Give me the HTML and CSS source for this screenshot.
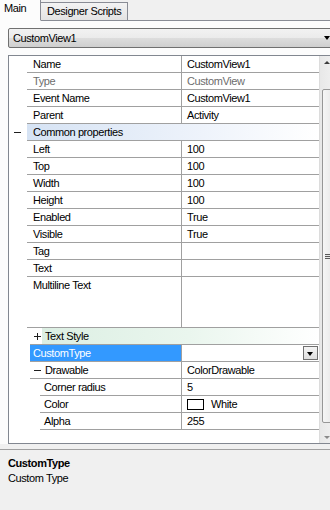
FILE: index.html
```html
<!DOCTYPE html>
<html lang="en">
<head>
    <meta charset="UTF-8">
    <title>Properties</title>
    <link rel="stylesheet" href="styles.css">
</head>
<body>

    <div class="tabs">
        <div class="tab active">Main</div>
        <div class="tab">Designer Scripts</div>
    </div>

    <div class="page">
        <div class="combo">
            <span>CustomView1</span>
            <span class="combo-arrow"></span>
        </div>

        <div class="grid">
            <div class="rows">
                <div class="row"><div class="gut"></div><div class="name">Name</div><div class="val">CustomView1</div></div>
                <div class="row dim"><div class="gut"></div><div class="name">Type</div><div class="val">CustomView</div></div>
                <div class="row"><div class="gut"></div><div class="name">Event Name</div><div class="val">CustomView1</div></div>
                <div class="row"><div class="gut"></div><div class="name">Parent</div><div class="val">Activity</div></div>
                <div class="row"><div class="gut"><span class="sign minus"></span></div><div class="cat">Common properties</div></div>
                <div class="row"><div class="gut"></div><div class="name">Left</div><div class="val">100</div></div>
                <div class="row"><div class="gut"></div><div class="name">Top</div><div class="val">100</div></div>
                <div class="row"><div class="gut"></div><div class="name">Width</div><div class="val">100</div></div>
                <div class="row"><div class="gut"></div><div class="name">Height</div><div class="val">100</div></div>
                <div class="row"><div class="gut"></div><div class="name">Enabled</div><div class="val">True</div></div>
                <div class="row"><div class="gut"></div><div class="name">Visible</div><div class="val">True</div></div>
                <div class="row"><div class="gut"></div><div class="name">Tag</div><div class="val"></div></div>
                <div class="row"><div class="gut"></div><div class="name">Text</div><div class="val"></div></div>
                <div class="row tall"><div class="gut"></div><div class="name">Multiline Text</div><div class="val"></div></div>
                <div class="row"><div class="gut sub"></div><div class="cat green"><span class="sign plus"></span>Text Style</div></div>
                <div class="row selected"><div class="gut sub"></div><div class="name">CustomType</div><div class="val"><span class="drop"></span></div></div>
                <div class="row"><div class="gut sub"></div><div class="name"><span class="sign minus"></span>Drawable</div><div class="val">ColorDrawable</div></div>
                <div class="row"><div class="gut child"></div><div class="name">Corner radius</div><div class="val">5</div></div>
                <div class="row"><div class="gut child"></div><div class="name">Color</div><div class="val"><span class="swatch"></span>White</div></div>
                <div class="row"><div class="gut child"></div><div class="name">Alpha</div><div class="val">255</div></div>
            </div>
            <div class="scrollbar">
                <div class="arrow up"></div>
                <div class="thumb"><span class="grip"></span></div>
                <div class="arrow down"></div>
            </div>
        </div>
    </div>

    <div class="splitter"></div>

    <div class="desc">
        <div class="desc-title">CustomType</div>
        <div>Custom Type</div>
    </div>

</body>
</html>
```

FILE: styles.css
```css
body {
    margin: 0;
    width: 330px;
    height: 510px;
    overflow: hidden;
    background: #f0f0f0;
    font-family: "Liberation Sans", Arial, sans-serif;
    font-size: 11px;
    letter-spacing: -0.4px;
    color: #000;
}

.tabs {
    display: flex;
    align-items: flex-end;
    height: 20px;
    border-bottom: 1px solid #898c95;
}

.tab {
    height: 17px;
    line-height: 17px;
    padding: 0 6px 0 6px;
    margin-bottom: -1px;
    border: 1px solid #898c95;
    border-left: none;
    background: linear-gradient(#f3f3f3, #e3e3e3);
}

.tab.active {
    height: 21px;
    line-height: 19px;
    width: 32px;
    padding: 0 4px;
    border-top: none;
    background: #fcfcfc;
    border-bottom-color: #fcfcfc;
}

.page {
    background: #fcfcfc;
    padding: 7px 0 0 8px;
    box-sizing: border-box;
    height: 423px;
}

.combo {
    display: flex;
    align-items: center;
    justify-content: space-between;
    width: 330px;
    height: 20px;
    box-sizing: border-box;
    padding-left: 4px;
    border: 1px solid #707070;
    border-radius: 2px;
    background: linear-gradient(#f2f2f2 0, #ebebeb 50%, #dddddd 50%, #cfcfcf 100%);
}

.combo-arrow {
    margin-right: 7px;
    border-left: 3px solid transparent;
    border-right: 3px solid transparent;
    border-top: 4px solid #000;
}

.grid {
    display: flex;
    margin-top: 7px;
    width: 330px;
    height: 389px;
    box-sizing: border-box;
    border: 1px solid #828790;
    background: #fff;
}

.rows {
    width: 310px;
    flex: none;
}

.row {
    display: flex;
    height: 17px;
    line-height: 16px;
}

.row.tall {
    height: 51px;
}

.gut {
    width: 18px;
    flex: none;
    display: flex;
    align-items: center;
    justify-content: center;
}

.gut.sub {
    width: 21px;
}

.gut.child {
    width: 31px;
}

.name {
    width: 155px;
    flex: none;
    box-sizing: border-box;
    padding-left: 6px;
    border-bottom: 1px solid #a0a0a0;
    border-right: 1px solid #a0a0a0;
    white-space: nowrap;
    display: flex;
    align-items: flex-start;
}

.gut.sub + .name {
    width: 152px;
    padding-left: 3px;
}

.gut.child + .name {
    width: 142px;
    padding-left: 4px;
}

.val {
    flex: 1;
    padding-left: 5px;
    border-bottom: 1px solid #a0a0a0;
    display: flex;
    align-items: flex-start;
    white-space: nowrap;
}

.dim .name, .dim .val {
    color: #6d6d6d;
}

.cat {
    flex: 1;
    padding-left: 6px;
    border-bottom: 1px solid #a0a0a0;
    background: linear-gradient(90deg, #d6e3f4, #eef3fb 60%, #fff);
}

.cat.green {
    padding-left: 3px;
    display: flex;
    background: linear-gradient(90deg, #fff 0, #fff 12px, #dcefe3 12px, #eaf6ee 55%, #fff);
}

.selected .name {
    background: #3399ff;
    color: #fff;
    padding-left: 2px;
}

.sign {
    position: relative;
    width: 7px;
    height: 7px;
    margin: 5px 4px 0 1px;
    flex: none;
}

.gut .sign {
    margin: 0 2px 0 0;
}

.sign::before, .plus::after {
    content: "";
    position: absolute;
    background: #1e1e1e;
}

.sign::before {
    left: 0;
    top: 3px;
    width: 7px;
    height: 1px;
}

.plus::after {
    left: 3px;
    top: 0;
    width: 1px;
    height: 7px;
}

.drop {
    margin: 1px 0 0 auto;
    width: 15px;
    height: 14px;
    box-sizing: border-box;
    border: 1px solid #707070;
    background: linear-gradient(#f4f4f4, #dedede);
    position: relative;
}

.drop::after {
    content: "";
    position: absolute;
    left: 3px;
    top: 5px;
    border-left: 3.5px solid transparent;
    border-right: 3.5px solid transparent;
    border-top: 4px solid #000;
}

.row.selected .val {
    padding-right: 1px;
}

.swatch {
    width: 17px;
    height: 11px;
    box-sizing: border-box;
    border: 1px solid #000;
    background: #fff;
    margin: 3px 7px 0 0;
}

.scrollbar {
    width: 17px;
    flex: none;
    display: flex;
    flex-direction: column;
    align-items: center;
    background: linear-gradient(90deg, #e8e8e8, #f2f2f2);
    border-left: 1px solid #dcdcdc;
}

.arrow {
    height: 16px;
    width: 17px;
    position: relative;
}

.arrow::after {
    content: "";
    position: absolute;
    left: 4px;
    border-left: 3px solid transparent;
    border-right: 3px solid transparent;
}

.arrow.up::after {
    top: 5px;
    border-bottom: 3px solid #3c3c3c;
}

.arrow.down::after {
    top: 9px;
    border-top: 3px solid #8a8a8a;
}

.thumb {
    flex: 1;
    width: 15px;
    margin: 17px 0 4px 1px;
    box-sizing: border-box;
    border: 1px solid #979797;
    border-radius: 2px;
    background: linear-gradient(90deg, #f6f6f6, #e4e4e4);
    display: flex;
    align-items: center;
    justify-content: flex-start;
}

.grip {
    width: 7px;
    height: 5px;
    margin-left: 2px;
    background: repeating-linear-gradient(#5a5a5a 0, #5a5a5a 1px, #e8e8e8 1px, #e8e8e8 2px);
}

.splitter {
    height: 5px;
}

.desc {
    height: 61px;
    border-top: 1px solid #a0a0a0;
    padding: 6px 0 0 8px;
    box-sizing: border-box;
    line-height: 15px;
}

.desc-title {
    font-weight: bold;
}
```
